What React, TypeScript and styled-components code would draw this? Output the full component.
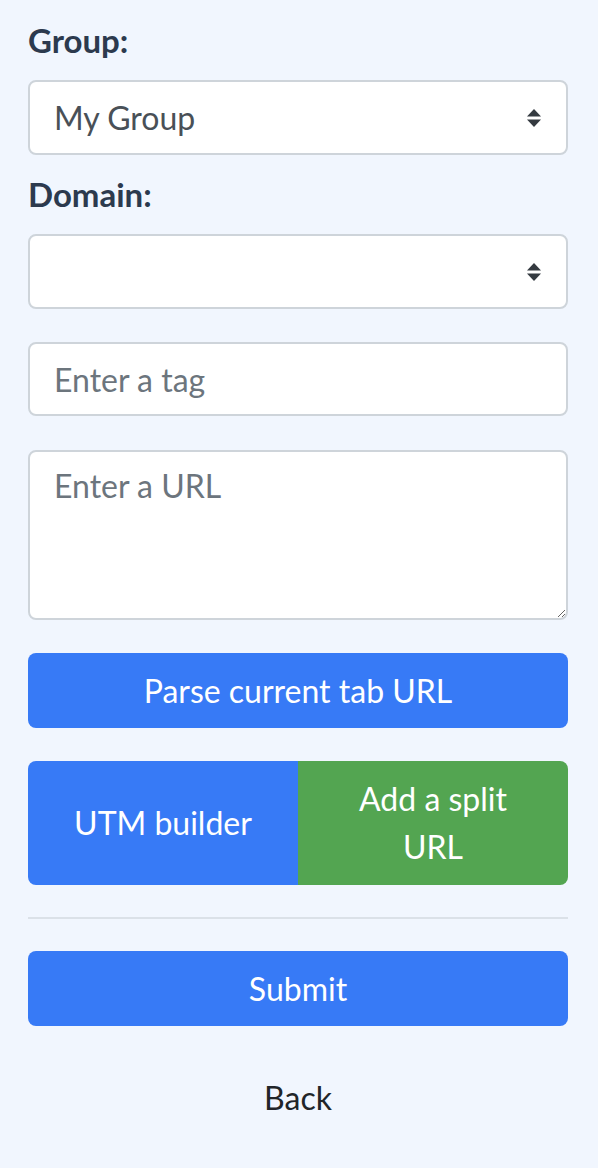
import React from "react";
import { useState } from "react";
import styled, { createGlobalStyle } from "styled-components";

const GlobalStyle = createGlobalStyle`
  html, body {
    margin: 0;
    padding: 0;
    background: #f1f6fe;
  }
  body {
    font-family: Lato, "Noto Sans", sans-serif;
  }
  * {
    box-sizing: border-box;
  }
`;

const ArrowsIcon: React.FC = () => (
  <svg width="16" height="20" viewBox="0 0 16 20">
    <path d="M8 1 L15 8.5 H1 Z" fill="#343a40" />
    <path d="M8 19 L15 11.5 H1 Z" fill="#343a40" />
  </svg>
);

const App: React.FC = () => {
  const [group, setGroup] = useState<string>("My Group");
  const [domain, setDomain] = useState<string>("");
  const [tag, setTag] = useState<string>("");
  const [url, setUrl] = useState<string>("");

  return (
    <>
      <GlobalStyle />
      <Page>
        <FormGroup>
          <Label>Group:</Label>
          <SelectWrap>
            <Select value={group} onChange={(e) => setGroup(e.target.value)}>
              <option>My Group</option>
            </Select>
            <ArrowBox>
              <ArrowsIcon />
            </ArrowBox>
          </SelectWrap>
        </FormGroup>
        <FormGroup $last>
          <Label>Domain:</Label>
          <SelectWrap>
            <Select value={domain} onChange={(e) => setDomain(e.target.value)}>
              <option value=""></option>
            </Select>
            <ArrowBox>
              <ArrowsIcon />
            </ArrowBox>
          </SelectWrap>
        </FormGroup>
        <Field $gap={34}>
          <Input
            type="text"
            placeholder="Enter a tag"
            value={tag}
            onChange={(e) => setTag(e.target.value)}
          />
        </Field>
        <Field>
          <TextArea
            placeholder="Enter a URL"
            value={url}
            onChange={(e) => setUrl(e.target.value)}
          />
        </Field>
        <Field>
          <Button $color="#377af6">Parse current tab URL</Button>
        </Field>
        <SplitRow>
          <SplitButton $color="#377af6">UTM builder</SplitButton>
          <SplitButton $color="#53a551">Add a split URL</SplitButton>
        </SplitRow>
        <Divider />
        <Field>
          <Button $color="#377af6">Submit</Button>
        </Field>
        <LinkButton>Back</LinkButton>
      </Page>
    </>
  );
};

export default App;

const Page = styled.div`
  width: 598px;
  padding: 16px 30px 32px 28px;
  display: flex;
  flex-direction: column;
`;

const FormGroup = styled.div<{ $last?: boolean }>`
  margin-bottom: ${(p) => (p.$last ? 33 : 15)}px;
`;

const Label = styled.label`
  display: block;
  font-size: 33px;
  font-weight: 700;
  line-height: 48px;
  color: #2c3a4e;
  margin-bottom: 16px;
`;

const SelectWrap = styled.div`
  position: relative;
`;

const Select = styled.select`
  display: block;
  width: 100%;
  height: 75px;
  appearance: none;
  background: #fff;
  border: 2px solid #ced4da;
  border-radius: 8px;
  padding: 0 60px 0 24px;
  font-family: inherit;
  font-size: 32px;
  color: #495057;
  outline: none;
`;

const ArrowBox = styled.span`
  position: absolute;
  right: 26px;
  top: 50%;
  transform: translateY(-50%);
  display: flex;
  pointer-events: none;
`;

const Field = styled.div<{ $gap?: number }>`
  margin-bottom: ${(p) => p.$gap ?? 33}px;
`;

const Input = styled.input`
  display: block;
  width: 100%;
  height: 74px;
  background: #fff;
  border: 2px solid #ced4da;
  border-radius: 8px;
  padding: 0 24px;
  font-family: inherit;
  font-size: 32px;
  color: #495057;
  outline: none;
  &::placeholder {
    color: #6c757d;
  }
`;

const TextArea = styled.textarea`
  display: block;
  width: 100%;
  height: 170px;
  background: #fff;
  border: 2px solid #ced4da;
  border-radius: 8px;
  padding: 10px 24px;
  font-family: inherit;
  font-size: 32px;
  line-height: 48px;
  color: #495057;
  outline: none;
  &::placeholder {
    color: #6c757d;
  }
`;

const Button = styled.button<{ $color: string }>`
  display: block;
  width: 100%;
  height: 75px;
  border: none;
  border-radius: 8px;
  background: ${(p) => p.$color};
  color: #fff;
  font-family: inherit;
  font-size: 32px;
  cursor: pointer;
`;

const SplitRow = styled.div`
  display: grid;
  grid-template-columns: 1fr 1fr;
  height: 124px;
  border-radius: 8px;
  overflow: hidden;
  margin-bottom: 32px;
`;

const SplitButton = styled.button<{ $color: string }>`
  border: none;
  background: ${(p) => p.$color};
  color: #fff;
  font-family: inherit;
  font-size: 32px;
  line-height: 48px;
  padding: 12px 40px;
  cursor: pointer;
`;

const Divider = styled.hr`
  width: 100%;
  border: none;
  border-top: 2px solid #dbe1e8;
  margin: 0 0 32px;
`;

const LinkButton = styled.button`
  display: block;
  width: 100%;
  height: 76px;
  border: none;
  background: transparent;
  color: #212529;
  font-family: inherit;
  font-size: 32px;
  cursor: pointer;
`;
